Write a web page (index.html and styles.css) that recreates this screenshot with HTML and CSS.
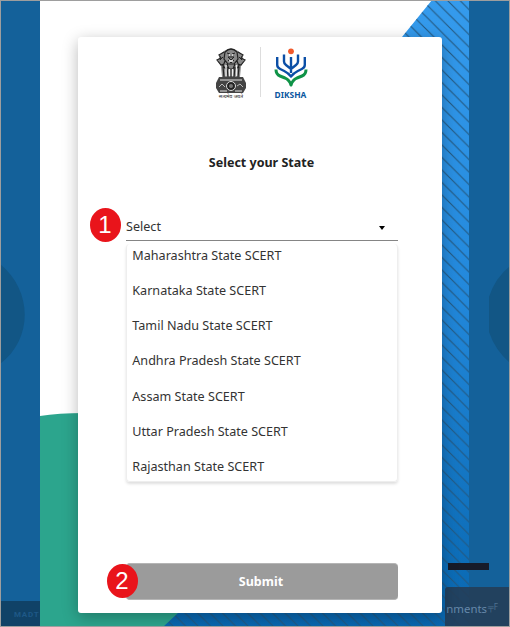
FILE: index.html
```
<!DOCTYPE html>
<html lang="en">
<head>
<meta charset="utf-8">
<title>Select your State</title>
<link rel="stylesheet" href="styles.css">
</head>
<body>
<div class="screen">
  <svg class="backdrop" viewBox="0 0 510 627" aria-hidden="true">
    <defs>
      <linearGradient id="sky" x1="0" y1="0" x2="0" y2="1"><stop offset="0" stop-color="#359bed"/><stop offset=".45" stop-color="#2389dc"/><stop offset="1" stop-color="#0867b0"/></linearGradient>
      <pattern id="stripes" width="12.5" height="12.5" patternUnits="userSpaceOnUse" patternTransform="translate(0 3)"><path d="M-2-2L15 15M-2 10.5L3 15.5M10.5-2L15.5 3" stroke="#24587f" stroke-width="1.1"/></pattern>
    </defs>
    <path fill="#fff" d="M40 0h429v627H40z"/>
    <path fill="url(#sky)" d="M469 0h-37l-30 37v400L163 613v14h306z"/>
    <path fill="url(#stripes)" d="M469 0h-37l-30 37v400L163 613v14h306z"/>
    <path fill="#2ca58d" d="M40 416q18-3 45-3h93v200l-15 14H40z"/>
    <path fill="#14619a" d="M0 0h40v627H0zM469 0h41v627h-41z"/>
    <path fill="#125685" d="M0 264C33 291 33 339 0 364zM510 266Q495 278 489 297v35q6 18 21 31z"/>
    <path fill="#104267" d="M0 601h40v26H0z"/>
  </svg>
  <div class="ghost">MADT</div>
  <div class="marker"></div>
  <div class="comments"><span class="clip">nments</span><span class="off">╤F</span></div>
  <main class="dialog">
    <header class="logos">
      <div class="emblem">
        <svg viewBox="0 0 30 46" width="30" height="46" aria-hidden="true">
          <path fill="#888" d="M8 3Q15-2 22 3l4 4 2 6-3 5-1 11H6L5 18l-3-5 2-6z"/>
          <g fill="none" stroke="#222" stroke-width="1.2">
            <path d="M9 4Q15-2 21 4l1 7-4 5h-6l-4-5zM8 4L3 7l2 3-4 2 4 5 3-1M22 4l5 3-2 3 4 2-4 5-3-1M9 13l-2 5 3 3M21 13l2 5-3 3M11 16l2 5h4l2-5M7 19l1 10M11 19l1 10M15 21v8M19 19l-1 10M23 19l-1 10"/>
            <path d="M11 5l3 1M16 6l3-1M12 9h6l-3 3zM12 12l3 3 3-3M4 12l3-3M26 12l-3-3" stroke-width="1"/>
          </g>
          <path stroke="#eee" stroke-width="1.3" d="M10 17v11M13.500 21v7M16.500 21v7M20.500 17v11M13 7h1M16 7h1M13 13h4"/>
          <path fill="#444" d="M3 29h24l3 6v5l-3 5H3l-3-5v-5z"/>
          <path stroke="#e5e5e5" d="M4 32h22M4 43h7M19 43h7"/>
          <circle cx="15" cy="38" r="4.5" fill="#222" stroke="#ddd"/><circle cx="15" cy="38" r="2" fill="#777"/>
          <path fill="none" stroke="#bbb" d="M3 39l3-3 3 3M21 38l3-2 3 3"/>
        </svg>
        <span class="motto">सत्यमेव जयते</span>
      </div>
      <div class="brand">
        <svg viewBox="0 0 34 40" width="34" height="40" aria-hidden="true">
          <circle cx="17" cy="4.300" r="2.900" fill="#f15a2b"/>
          <path fill="none" stroke="#0b4fa6" stroke-width="2.400" stroke-linejoin="round" d="M3.200 10v8q0 2.500 3 4l4 2q4 2 6.800 5.500 2.800-3.500 6.800-5.500l4-2q3-1.500 3-4v-8M10 7.500v7q0 2 2 3.500l5 4 5-4q2-1.500 2-3.500v-7M17 10v16"/>
          <path fill="none" stroke="#0f9347" stroke-width="3" stroke-linejoin="round" d="M2 22.500q0 5 4 6.500l5 2q4.500 2 6 7 1.500-5 6-7l5-2q4-1.500 4-6.500"/>
        </svg>
        <span class="brand-name">DIKSHA</span>
      </div>
    </header>
    <h1>Select your State</h1>
    <div class="field"><span>Select</span><i class="caret"></i><b class="badge first">1</b></div>
    <ul class="options">
      <li>Maharashtra State SCERT</li>
      <li>Karnataka State SCERT</li>
      <li>Tamil Nadu State SCERT</li>
      <li>Andhra Pradesh State SCERT</li>
      <li>Assam State SCERT</li>
      <li>Uttar Pradesh State SCERT</li>
      <li>Rajasthan State SCERT</li>
    </ul>
    <div class="action"><button type="button">Submit</button><b class="badge second">2</b></div>
  </main>
</div>
</body>
</html>
```
FILE: styles.css
```
* { box-sizing: border-box; }
body { margin: 0; font-family: "Noto Sans", sans-serif; color: #333; }
.screen { position: relative; width: 510px; height: 627px; padding: 37px 68px 0 78px; overflow: hidden; }
.screen::after { content: ""; position: absolute; inset: 0; border: 1px solid #9e9e9e; pointer-events: none; }
.backdrop { position: absolute; inset: 0; width: 510px; height: 627px; }
.ghost { position: absolute; left: 14px; top: 609px; width: 26px; overflow: hidden; font: bold 8px/12px Roboto, sans-serif; letter-spacing: .8px; color: #1e5886; }
.marker { position: absolute; left: 448px; top: 563px; width: 41px; height: 7px; background: #171b29; }
.comments { position: absolute; left: 445px; top: 587px; width: 65px; height: 40px; padding-top: 13px; display: flex; background: rgba(36, 60, 85, .88); border-radius: 3px 0 0; color: #6688aa; font-size: 11.4px; line-height: 18px; }
.clip { width: 42px; display: flex; justify-content: flex-end; }
.off { margin-left: 1px; font-size: 8px; line-height: 13px; color: #4f7191; }
.dialog { position: relative; width: 364px; height: 576px; padding: 10px 44px 0 48px; background: #fff; border-radius: 3px; box-shadow: 0 4px 16px rgba(0, 0, 0, .28); }
.logos { display: flex; height: 52px; padding-left: 90px; }
.emblem { width: 45px; height: 50px; border-right: 1px solid #ddd; display: flex; flex-direction: column; align-items: flex-start; }
.emblem svg { flex: none; margin-top: 1px; }
.motto { width: 30px; font-size: 5px; line-height: 4px; white-space: nowrap; text-align: center; color: #222; }
.brand { width: 59px; display: flex; flex-direction: column; align-items: center; }
.brand svg { flex: none; }
.brand-name { font-size: 8.4px; line-height: 11px; margin-top: 2px; font-weight: 700; color: #0b579f; }
h1 { margin: 53px 0 0; width: 271px; font-size: 12.5px; line-height: 21px; font-weight: 700; text-align: center; color: #222; }
.field { position: relative; width: 272px; height: 30px; margin-top: 38px; padding: 1px 12px 0 0; display: flex; justify-content: space-between; align-items: center; border-bottom: 1px solid #858585; font-size: 12.6px; }
.caret { margin: 3px 1px 0 0; border: 3.5px solid transparent; border-top: 4px solid #000; border-bottom: 0; }
.badge { position: absolute; width: 31px; height: 34px; border-radius: 50%; background: #e9141b; color: #fff; font: 24px/34px "Liberation Sans", sans-serif; text-align: center; }
.first { left: -36.5px; top: -3px; }
.second { left: -19.5px; top: 1px; }
.options { list-style: none; width: 272px; height: 238px; margin: 3px 0 0; padding: 0 5.3px; border: 1px solid #eee; border-top: 0; border-radius: 4px; box-shadow: 0 2px 3px rgba(0, 0, 0, .13); font-size: 12.6px; }
.options li { height: 35.15px; line-height: 23.4px; }
.action { position: relative; width: 272px; margin-top: 81px; }
button { display: block; width: 100%; height: 37px; padding: 0 2px 0 0; border: 1px solid #b5b5b5; border-width: 1px 0; border-radius: 4px; background: #9b9b9b; color: #fff; font: bold 12.5px "Noto Sans", sans-serif; }
```
